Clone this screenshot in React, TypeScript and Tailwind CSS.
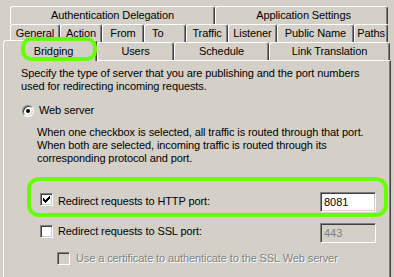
import React from "react";

const tab =
  "h-full shrink-0 flex items-center justify-center border-t border-l border-white border-r border-r-[#404040] shadow-[inset_-1px_0_0_#808080] rounded-t-[3px] bg-[#d4d0c8]";

const sunken =
  "border border-t-[#808080] border-l-[#808080] border-b-white border-r-white shadow-[inset_1px_1px_0_#404040,inset_-1px_-1px_0_#d4d0c8]";

function Check() {
  const px: [number, number][] = [
    [6, 0],
    [5, 1], [6, 1],
    [0, 2], [4, 2], [5, 2], [6, 2],
    [0, 3], [1, 3], [3, 3], [4, 3], [5, 3],
    [0, 4], [1, 4], [2, 4], [3, 4], [4, 4],
    [1, 5], [2, 5], [3, 5],
    [2, 6],
  ];
  return (
    <svg width="7" height="7" viewBox="0 0 7 7" shapeRendering="crispEdges">
      {px.map(([x, y], i) => (
        <rect key={i} x={x} y={y} width="1" height="1" fill="#000" />
      ))}
    </svg>
  );
}

function Checkbox({ checked, disabled }: { checked?: boolean; disabled?: boolean }) {
  return (
    <div
      className={
        "w-[13px] h-[13px] shrink-0 flex items-center justify-center " +
        sunken +
        (disabled ? " bg-[#d4d0c8]" : " bg-white")
      }
    >
      {checked ? <Check /> : null}
    </div>
  );
}

export default function App() {
  return (
    <div className="w-[394px] h-[277px] overflow-hidden bg-[#d4d0c8] relative font-['Liberation_Sans',Arial,sans-serif] text-[11px] leading-[13px] tracking-[-0.1px] text-black">
      <div className="pt-[6px]">
        <div className="flex h-[18px] ml-[10px]">
          <div className={tab + " w-[205px]"}>Authentication Delegation</div>
          <div className={tab + " w-[173px] pl-[4px]"}>Application Settings</div>
        </div>
        <div className="flex h-[18px] ml-[10px]">
          <div className={tab + " w-[50px]"}>General</div>
          <div className={tab + " w-[42px]"}>Action</div>
          <div className={tab + " w-[42px]"}>From</div>
          <div className={tab + " w-[42px] !justify-start pl-[7px]"}>To</div>
          <div className={tab + " w-[42px]"}>Traffic</div>
          <div className={tab + " w-[49px]"}>Listener</div>
          <div className={tab + " w-[77px]"}>Public Name</div>
          <div className={tab + " w-[34px]"}>Paths</div>
        </div>
        <div className="flex h-[18px] items-end ml-[3px]">
          <div className={tab + " !h-[21px] w-[94px] pl-[7px] relative top-[1px] z-10"}>Bridging</div>
          <div className={tab + " w-[77px]"}>Users</div>
          <div className={tab + " w-[95px]"}>Schedule</div>
          <div className={tab + " w-[121px]"}>Link Translation</div>
        </div>
      </div>

      <div className="ml-[3px] w-[388px] h-[230px] border-l border-t border-white border-r border-r-[#404040] shadow-[inset_-1px_0_0_#808080]">
        <div className="pl-[17px] pr-[14px] pt-[6px]">
          <p>
            Specify the type of server that you are publishing and the port numbers
            <br />
            used for redirecting incoming requests.
          </p>
          <div className="mt-[11px] flex items-center h-[13px] ml-[1px]">
            <div className={"w-[12px] h-[12px] rounded-full bg-white flex items-center justify-center " + sunken}>
              <div className="w-[4px] h-[4px] rounded-full bg-black" />
            </div>
            <span className="ml-[5px]">Web server</span>
          </div>
          <p className="mt-[9px] ml-[16px]">
            When one checkbox is selected, all traffic is routed through that port.
            <br />
            When both are selected, incoming traffic is routed through its
            <br />
            corresponding protocol and port.
          </p>

          <div className="mt-[27px] flex items-start h-[20px] ml-[19px]">
            <div className="mt-[1px]">
              <Checkbox checked />
            </div>
            <span className="ml-[5px] mt-[3px]">Redirect requests to HTTP port:</span>
            <div className={"ml-auto w-[56px] h-[20px] bg-white pl-[3px] flex items-center tracking-normal " + sunken}>
              8081
            </div>
          </div>

          <div className="mt-[11px] flex items-start h-[20px] ml-[19px]">
            <div className="mt-[2px]">
              <Checkbox />
            </div>
            <span className="ml-[5px] mt-[2px]">Redirect requests to SSL port:</span>
            <div className={"ml-auto w-[56px] h-[20px] bg-[#d4d0c8] text-[#808080] pl-[3px] flex items-center tracking-normal " + sunken}>
              443
            </div>
          </div>

          <div className="mt-[9px] flex items-center h-[13px] ml-[36px]">
            <Checkbox disabled />
            <span className="ml-[6px] text-[#808080] [text-shadow:1px_1px_0_#ffffff]">
              Use a certificate to authenticate to the SSL Web server
            </span>
          </div>
        </div>
      </div>

      <div className="absolute left-[21px] top-[37px] w-[76px] h-[24px] border-[4px] border-[#66ff00] rounded-[10px] z-20" />
      <div className="absolute left-[27px] top-[177px] w-[361px] h-[40px] border-[4px] border-[#66ff00] rounded-[12px] z-20" />
    </div>
  );
}
